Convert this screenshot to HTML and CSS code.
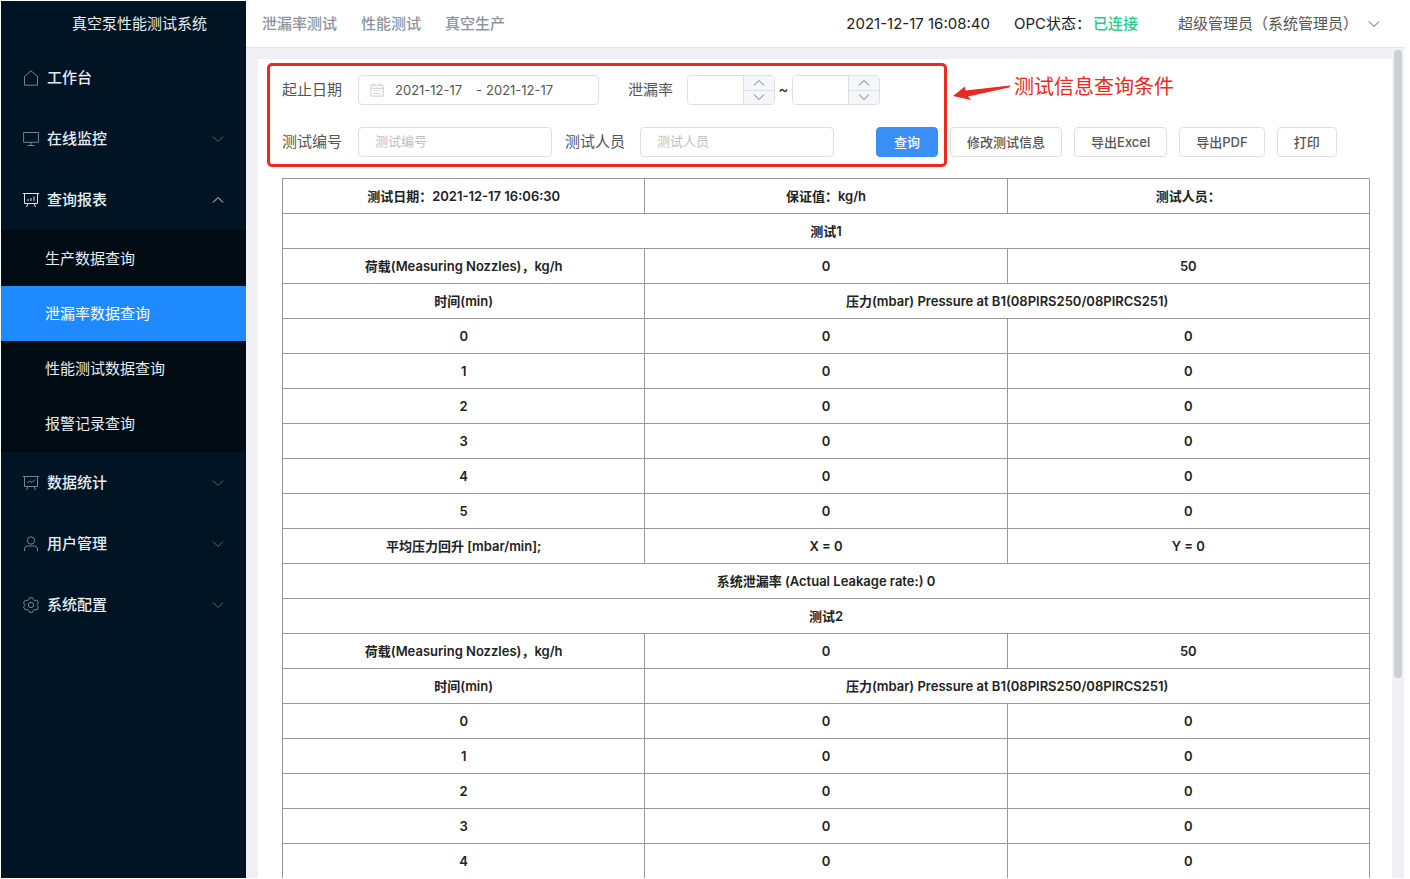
FILE: index.html
```html
<!DOCTYPE html>
<html lang="zh-CN">
<head>
<meta charset="utf-8">
<title>真空泵性能测试系统</title>
<link rel="stylesheet" href="styles.css">
</head>
<body>
<svg class="defs" aria-hidden="true">
  <symbol id="down" viewBox="0 0 12 12"><path d="M1 3.5 6 8.5 11 3.5"/></symbol>
  <symbol id="up" viewBox="0 0 12 12"><path d="M1 8.5 6 3.5 11 8.5"/></symbol>
</svg>
<div class="app">
  <aside class="sidebar">
    <h1 class="brand">真空泵性能测试系统</h1>
    <nav class="menu">
      <a class="item" href="#"><svg class="icon" viewBox="0 0 16 16"><path d="M1.5 15.2V6.4L8 .9l6.500 5.500v8.800z"/></svg><span>工作台</span></a>
      <a class="item" href="#"><svg class="icon" viewBox="0 0 16 16"><path d="M.6 1.500h14.800v9.800H.6zM8 11.300v3.200M4.500 14.500h7"/></svg><span>在线监控</span><svg class="chev"><use href="#down"/></svg></a>
      <a class="item open" href="#"><svg class="icon" viewBox="0 0 16 16"><path d="M0 1.500h16M1.500 1.500v10h13v-10M5 11.500l-1.500 3.500M11 11.500l1.500 3.500M5 7v2M8 6v3M11 4.500v4.500"/></svg><span>查询报表</span><svg class="chev"><use href="#up"/></svg></a>
      <div class="submenu">
        <a class="sub" href="#">生产数据查询</a>
        <a class="sub active" href="#">泄漏率数据查询</a>
        <a class="sub" href="#">性能测试数据查询</a>
        <a class="sub" href="#">报警记录查询</a>
      </div>
      <a class="item" href="#"><svg class="icon" viewBox="0 0 16 16"><path d="M0 1.500h16M1.500 1.500v10h13v-10M5 11.500l-1.500 3.500M11 11.500l1.500 3.500M4.500 8l2-2 2.500 1.500L12 4.500"/></svg><span>数据统计</span><svg class="chev"><use href="#down"/></svg></a>
      <a class="item" href="#"><svg class="icon" viewBox="0 0 16 16"><circle cx="8" cy="4.500" r="3.700"/><path d="M1.500 15.200v-2.200q0-3 3-3h7q3 0 3 3v2.200"/></svg><span>用户管理</span><svg class="chev"><use href="#down"/></svg></a>
      <a class="item" href="#"><svg class="icon" viewBox="0 0 16 16"><path d="M6.300.7h3.400l.6 2 1.500.9 2.100-.5 1.600 2.900-1.400 1.500v1l1.400 1.500-1.600 2.900-2.100-.5-1.500.9-.6 2H6.300l-.6-2-1.500-.9-2.100.5L.5 10l1.400-1.500v-1L.5 6l1.600-2.900 2.100.5 1.500-.9z"/><circle cx="8" cy="8" r="2.700"/></svg><span>系统配置</span><svg class="chev"><use href="#down"/></svg></a>
    </nav>
  </aside>

  <div class="main">
    <header class="topbar">
      <nav class="tabs">
        <a href="#">泄漏率测试</a>
        <a href="#">性能测试</a>
        <a href="#">真空生产</a>
      </nav>
      <time class="clock">2021-12-17 16:08:40</time>
      <div class="opc">OPC状态：<span class="ok">已连接</span></div>
      <button class="user" type="button">超级管理员（系统管理员）<svg class="chev"><use href="#down"/></svg></button>
    </header>

    <div class="scroller">
      <main class="card">
        <form class="filters">
          <div class="frow">
            <label class="lead" for="from">起止日期</label>
            <div class="range">
              <svg class="cal" viewBox="0 0 16 16"><path d="M1 2.500h14v12.500H1zM1 6h14M4.500.5v3M11.500.5v3M4 9h2M7 9h2M10 9h2M4 12h2M7 12h2M10 12h2"/></svg>
              <input id="from" type="text" value="2021-12-17"><span>-</span><input type="text" aria-label="结束日期" value="2021-12-17">
            </div>
            <label class="rate" for="min">泄漏率</label>
            <div class="number">
              <input id="min" type="text">
              <div class="steps"><button type="button" aria-label="增加"><svg><use href="#up"/></svg></button><button type="button" aria-label="减少"><svg><use href="#down"/></svg></button></div>
            </div>
            <span class="tilde">~</span>
            <div class="number">
              <input type="text" aria-label="泄漏率上限">
              <div class="steps"><button type="button" aria-label="增加"><svg><use href="#up"/></svg></button><button type="button" aria-label="减少"><svg><use href="#down"/></svg></button></div>
            </div>
          </div>
          <div class="frow">
            <label class="lead" for="no">测试编号</label>
            <input class="text" id="no" type="text" placeholder="测试编号">
            <label class="person" for="person">测试人员</label>
            <input class="text" id="person" type="text" placeholder="测试人员">
            <div class="actions">
              <button class="btn primary" type="button">查询</button>
              <button class="btn" type="button">修改测试信息</button>
              <button class="btn" type="button">导出Excel</button>
              <button class="btn" type="button">导出PDF</button>
              <button class="btn" type="button">打印</button>
            </div>
          </div>
          <div class="marker"></div>
          <div class="note">
            <svg viewBox="0 0 58 18"><path d="M0 12 12 2.500 12.500 6.500 57 1.500Q58 3 56 3.500L15 12.500 18 16z"/></svg>
            <span>测试信息查询条件</span>
          </div>
        </form>

        <table class="report">
          <tbody>
            <tr><th>测试日期：2021-12-17 16:06:30</th><th>保证值：kg/h</th><th>测试人员：</th></tr>
            <tr><th colspan="3">测试1</th></tr>
            <tr><th>荷载(Measuring Nozzles)，kg/h</th><th>0</th><th>50</th></tr>
            <tr><th>时间(min)</th><th colspan="2">压力(mbar) Pressure at B1(08PIRS250/08PIRCS251)</th></tr>
            <tr><td>0</td><td>0</td><td>0</td></tr>
            <tr><td>1</td><td>0</td><td>0</td></tr>
            <tr><td>2</td><td>0</td><td>0</td></tr>
            <tr><td>3</td><td>0</td><td>0</td></tr>
            <tr><td>4</td><td>0</td><td>0</td></tr>
            <tr><td>5</td><td>0</td><td>0</td></tr>
            <tr><th>平均压力回升 [mbar/min];</th><td>X = 0</td><td>Y = 0</td></tr>
            <tr><th colspan="3">系统泄漏率 (Actual Leakage rate:) 0</th></tr>
            <tr><th colspan="3">测试2</th></tr>
            <tr><th>荷载(Measuring Nozzles)，kg/h</th><th>0</th><th>50</th></tr>
            <tr><th>时间(min)</th><th colspan="2">压力(mbar) Pressure at B1(08PIRS250/08PIRCS251)</th></tr>
            <tr><td>0</td><td>0</td><td>0</td></tr>
            <tr><td>1</td><td>0</td><td>0</td></tr>
            <tr><td>2</td><td>0</td><td>0</td></tr>
            <tr><td>3</td><td>0</td><td>0</td></tr>
            <tr><td>4</td><td>0</td><td>0</td></tr>
          </tbody>
        </table>
      </main>
      <div class="track"><div class="thumb"></div></div>
    </div>
  </div>
</div>
</body>
</html>
```
FILE: styles.css
```css
* { box-sizing: border-box; }
body {
  margin: 0;
  background: #fff;
  color: #222;
  font: 15px/20px Inter, "Noto Sans CJK SC", sans-serif;
}
a { color: inherit; text-decoration: none; }
button, input { font: inherit; color: inherit; }
svg { fill: none; stroke: currentColor; }
.defs { display: none; }

.app {
  display: flex;
  height: 100vh;
  padding: 1px 6px 1px 1px;
  overflow: hidden;
}

.sidebar {
  flex: none;
  width: 245px;
  background: #001423;
  color: #e6eef5;
}
.brand {
  margin: 0;
  padding-left: 32px;
  font-size: 15px;
  font-weight: 400;
  line-height: 46px;
  text-align: center;
}
.item {
  display: flex;
  align-items: center;
  height: 61px;
  padding: 0 22px;
  font-weight: 500;
}
.icon {
  width: 16px;
  height: 16px;
  margin-right: 8px;
  color: #77838e;
}
.item.open .icon, .item.open .chev { color: #dfe7ee; }
.chev { width: 12px; height: 12px; }
.item .chev { margin-left: auto; color: #596774; }
.submenu { padding: 1px 0; background: #000b14; }
.sub {
  display: block;
  padding-left: 44px;
  line-height: 55px;
}
.sub.active { background: #1f8afe; color: #fff; }

.main {
  display: flex;
  flex: 1;
  flex-direction: column;
  min-width: 0;
}
.topbar {
  display: flex;
  flex: none;
  align-items: center;
  height: 47px;
  padding: 0 24px 0 16px;
  border-bottom: 1px solid #e4e5ea;
}
.tabs {
  display: flex;
  gap: 24px;
  margin-right: auto;
  color: #8f939b;
  font-weight: 500;
}
.opc { margin-left: 24px; }
.ok { margin-left: 2px; color: #2bcb8b; font-weight: 500; }
.user {
  display: flex;
  align-items: center;
  gap: 10px;
  margin-left: 40px;
  padding: 0;
  border: 0;
  background: none;
  color: #555;
}

.scroller {
  display: flex;
  flex: 1;
  min-height: 0;
  background: #f0f0f5;
}
.card {
  flex: 1;
  min-width: 0;
  margin: 11px 0 0 12px;
  padding: 16px 22px 0 24px;
  overflow: hidden;
  background: #fff;
}
.track { width: 12px; padding: 2px; }
.thumb {
  width: 8px;
  height: 76%;
  border-radius: 4px;
  background: #cbd0d3;
}

.filters {
  position: relative;
  display: grid;
  gap: 22px;
  margin-bottom: 21px;
  color: #555;
}
.frow { display: flex; align-items: center; height: 30px; }
.lead { flex: none; width: 76px; }
.range, .number, .text, .btn {
  height: 30px;
  border: 1px solid #dcdfe6;
  border-radius: 4px;
  background: #fff;
}
.range {
  display: flex;
  align-items: center;
  width: 241px;
  padding: 0 11px;
  font-size: 13px;
}
.cal { width: 14px; height: 14px; margin-right: 11px; color: #c3c5cb; }
.range input { width: 81px; padding: 0; border: 0; background: none; }
.range span { width: 10px; }
.rate { margin: 0 14px 0 29px; }
.number { display: flex; width: 88px; overflow: hidden; }
.number input { flex: 1; min-width: 0; padding: 0 8px; border: 0; }
.steps {
  display: grid;
  width: 31px;
  border-left: 1px solid #dcdfe6;
  background: #f5f6fa;
}
.steps button {
  display: flex;
  align-items: center;
  justify-content: center;
  padding: 0;
  border: 0;
  background: none;
  color: #777;
}
.steps button + button { border-top: 1px solid #dcdfe6; }
.steps svg { width: 12px; height: 12px; }
.tilde { width: 17px; color: #222; text-align: center; }
.text { width: 194px; padding: 0 16px 2px; font-size: 13px; }
.text::placeholder { color: #bdbfc5; opacity: 1; }
.person { margin: 0 15px 0 13px; }
.actions { display: flex; gap: 12px; margin-left: 42px; }
.btn {
  padding: 0 16px 1px;
  font-size: 13px;
  font-weight: 500;
  white-space: nowrap;
}
.btn.primary {
  padding: 0 17px 1px;
  border-color: #3a8ff7;
  background: #3a8ff7;
  color: #fff;
}
.marker {
  position: absolute;
  top: -12px;
  left: -15px;
  width: 680px;
  height: 104px;
  border: 3px solid #e92a22;
  border-radius: 5px;
  pointer-events: none;
}
.note {
  position: absolute;
  top: -2px;
  left: 671px;
  display: flex;
  gap: 3px;
  color: #e92a22;
  font-size: 20px;
  line-height: 28px;
  white-space: nowrap;
}
.note svg {
  width: 58px;
  height: 18px;
  margin-top: 11px;
  fill: currentColor;
  stroke: none;
}

.report {
  width: 100%;
  border-collapse: collapse;
  table-layout: fixed;
  font-size: 13px;
  font-weight: 600;
}
.report th, .report td {
  height: 35px;
  padding: 0;
  border: 1px solid #999;
  font-weight: 600;
  text-align: center;
}
```
